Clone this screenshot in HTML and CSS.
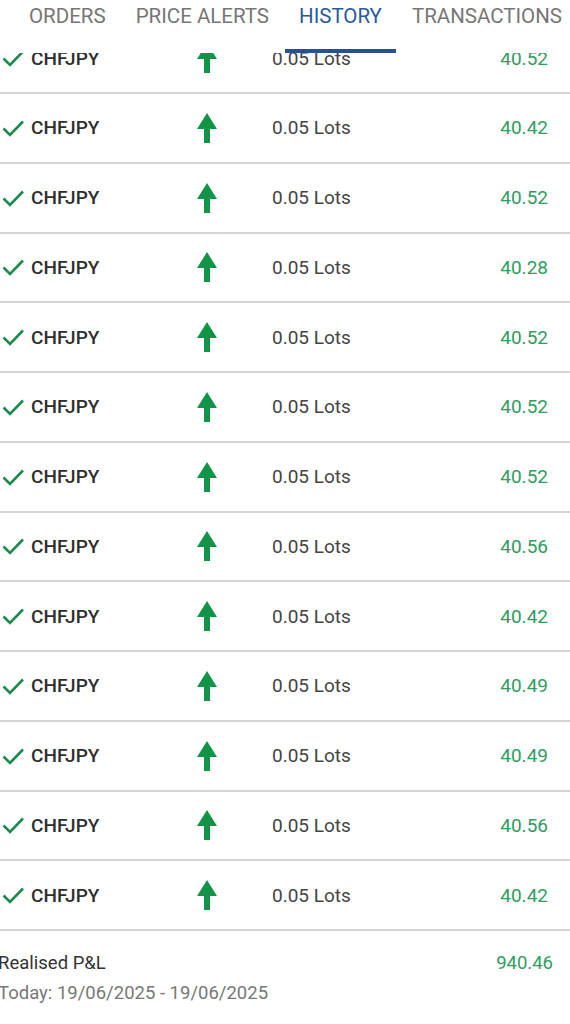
FILE: index.html
```html
<!DOCTYPE html>
<html lang="en">
<head>
    <meta charset="UTF-8">
    <meta name="viewport" content="width=device-width, initial-scale=1.0">
    <title>History</title>
    <link rel="stylesheet" href="styles.css">
</head>
<body>
    <div class="tabs">
        <div class="tab">ORDERS</div>
        <div class="tab">PRICE ALERTS</div>
        <div class="tab active">HISTORY</div>
        <div class="tab">TRANSACTIONS</div>
    </div>

    <div class="list-view">
        <div class="list" id="historyList"></div>
    </div>

    <div class="summary">
        <div class="summary-row">
            <span class="summary-label">Realised P&amp;L</span>
            <span class="summary-value">940.46</span>
        </div>
        <div class="summary-date">Today: 19/06/2025 - 19/06/2025</div>
    </div>

    <script>
        const trades = ['40.52', '40.42', '40.52', '40.28', '40.52', '40.52', '40.52',
                        '40.56', '40.42', '40.49', '40.49', '40.56', '40.42'];
        const list = document.getElementById('historyList');

        const checkIcon = '<svg width="22" height="18" viewBox="0 0 22 18"><polyline points="1.5,9.5 8,16 21,2.5" fill="none" stroke="#1c8a4c" stroke-width="2.6"/></svg>';
        const arrowIcon = '<svg width="20" height="30" viewBox="0 0 20 30"><polygon points="10,0 20,16 13,16 13,30 7,30 7,16 0,16" fill="#139348"/></svg>';

        trades.forEach(function(value) {
            const row = document.createElement('div');
            row.className = 'row';
            row.innerHTML = `<span class="check">${checkIcon}</span>
                <span class="symbol">CHFJPY</span>
                <span class="arrow">${arrowIcon}</span>
                <span class="lots">0.05 Lots</span>
                <span class="value">${value}</span>`;
            list.appendChild(row);
        });
    </script>
</body>
</html>
```

FILE: styles.css
```css
body {
    font-family: Roboto, "Liberation Sans", sans-serif;
    margin: 0;
    background-color: #fff;
    color: #333;
    overflow: hidden;
}
.tabs {
    position: relative;
    z-index: 1;
    display: flex;
    gap: 2px;
    height: 53px;
    padding-left: 15px;
    background-color: #fff;
    overflow: hidden;
}
.tab {
    box-sizing: border-box;
    height: 53px;
    padding: 4px 14px 0;
    font-size: 20.5px;
    line-height: 24px;
    color: #767676;
    white-space: nowrap;
}
.tab.active {
    color: #2c5a9a;
    border-bottom: 4px solid #24519a;
}
.list-view {
    overflow: hidden;
}
.list {
    margin-top: -28.75px;
}
.row {
    box-sizing: border-box;
    height: 69.75px;
    display: grid;
    grid-template-columns: 29px 162px 28px 1fr auto;
    align-items: center;
    padding: 0 22px 0 2px;
    border-bottom: 2px solid #d4d4d4;
    font-size: 19px;
}
.check svg, .arrow svg {
    display: block;
}
.arrow {
    display: flex;
    justify-content: center;
}
.symbol {
    font-weight: 500;
    color: #2e2e2e;
}
.lots {
    padding-left: 51px;
    color: #444;
}
.value {
    color: #2f9c60;
}
.summary {
    padding: 21px 17px 0 0;
    margin-left: -2px;
}
.summary-row {
    display: flex;
    justify-content: space-between;
    font-size: 18.5px;
    line-height: 22px;
}
.summary-label {
    color: #333;
}
.summary-value {
    color: #2f9c60;
}
.summary-date {
    margin-top: 8px;
    font-size: 18.5px;
    line-height: 22px;
    color: #777;
}
```
